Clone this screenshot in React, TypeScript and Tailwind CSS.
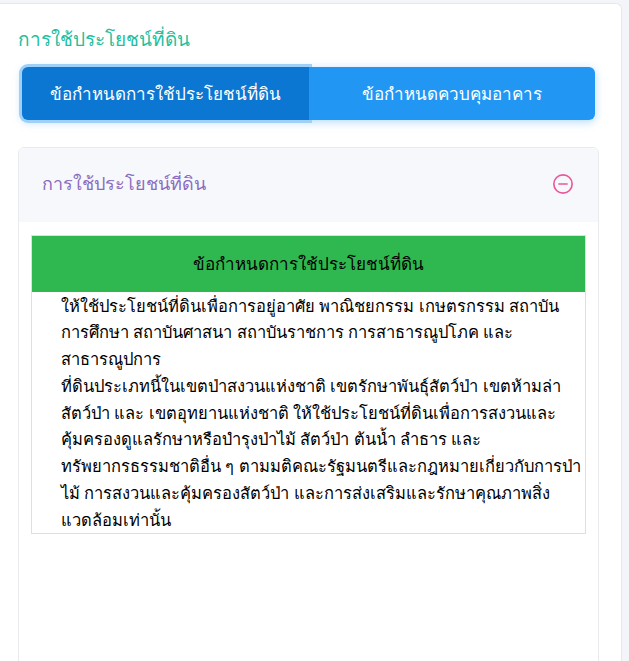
import React, { useState } from 'react';

// lines broken where the original page breaks them
const RULE_LINES = [
  'ให้ใช้ประโยชน์ที่ดินเพื่อการอยู่อาศัย พาณิชยกรรม เกษตรกรรม สถาบัน',
  'การศึกษา สถาบันศาสนา สถาบันราชการ การสาธารณูปโภค และ',
  'สาธารณูปการ',
  'ที่ดินประเภทนี้ในเขตป่าสงวนแห่งชาติ เขตรักษาพันธุ์สัตว์ป่า เขตห้ามล่า',
  'สัตว์ป่า และ เขตอุทยานแห่งชาติ ให้ใช้ประโยชน์ที่ดินเพื่อการสงวนและ',
  'คุ้มครองดูแลรักษาหรือบำรุงป่าไม้ สัตว์ป่า ต้นน้ำ ลำธาร และ',
  'ทรัพยากรธรรมชาติอื่น ๆ ตามมติคณะรัฐมนตรีและกฎหมายเกี่ยวกับการป่า',
  'ไม้ การสงวนและคุ้มครองสัตว์ป่า และการส่งเสริมและรักษาคุณภาพสิ่ง',
  'แวดล้อมเท่านั้น',
];

export default function App() {
  const [tab, setTab] = useState<'land' | 'building'>('land');
  const [open, setOpen] = useState(true);

  return (
    <div className="min-h-[661px] bg-[#f4f5f8] pt-[3px] font-['Noto_Sans','Liberation_Sans',sans-serif]">
      <div className="w-[622px] h-[658px] overflow-hidden bg-white border-t border-r border-[#e6e8ee] rounded-tr-md pt-[22px] pl-[18px] pr-[22px]">
        <h1 className="text-[19px] leading-[26px] text-[#1fbf9f]">การใช้ประโยชน์ที่ดิน</h1>

        {/* tabs */}
        <div className="mt-[15px] ml-[4px] mr-[4px] flex rounded-md shadow-[0_2px_8px_rgba(33,150,243,0.35)]">
          <button
            onClick={() => setTab('land')}
            className={`flex-1 h-[53px] rounded-l-md text-white text-[17px] font-medium ${tab === 'land' ? 'bg-[#0b77d2] ring-[3px] ring-[#9fd0f7]' : 'bg-[#2196f3]'}`}
          >
            ข้อกำหนดการใช้ประโยชน์ที่ดิน
          </button>
          <button
            onClick={() => setTab('building')}
            className={`flex-1 h-[53px] rounded-r-md text-white text-[17px] font-medium ${tab === 'building' ? 'bg-[#0b77d2] ring-[3px] ring-[#9fd0f7]' : 'bg-[#2196f3]'}`}
          >
            ข้อกำหนดควบคุมอาคาร
          </button>
        </div>

        {/* accordion card */}
        <div className="mt-[27px] border border-[#e8eaef] rounded-md bg-white h-[520px]">
          <div className="h-[74px] bg-[#f7f8fb] flex items-center justify-between pl-[23px] pr-[24px] rounded-t-md">
            <span className="text-[18px] text-[#8a6cc0] -mt-[3px]">การใช้ประโยชน์ที่ดิน</span>
            <button onClick={() => setOpen(!open)} className="text-[#e8589a] -mt-[3px]">
              <svg width="22" height="22" viewBox="0 0 24 24" fill="none" stroke="currentColor" strokeWidth="1.8" strokeLinecap="round">
                <circle cx="12" cy="12" r="10" />
                {open ? <line x1="7.5" y1="12" x2="16.5" y2="12" /> : <><line x1="7.5" y1="12" x2="16.5" y2="12" /><line x1="12" y1="7.5" x2="12" y2="16.5" /></>}
              </svg>
            </button>
          </div>
          {open && (
            <div className="px-[12px] pt-[13px]">
              <table className="w-full border border-[#dcdfe4] border-collapse">
                <thead>
                  <tr>
                    <th className="bg-[#2fb84f] h-[56px] text-[17px] font-normal text-black">ข้อกำหนดการใช้ประโยชน์ที่ดิน</th>
                  </tr>
                </thead>
                <tbody>
                  <tr>
                    <td className="pl-[29px] pr-[2px] pt-[1px] pb-0 text-[16.5px] leading-[26.75px] text-black align-top">
                      {RULE_LINES.map((l) => (
                        <div key={l} className="whitespace-nowrap">{l}</div>
                      ))}
                    </td>
                  </tr>
                </tbody>
              </table>
            </div>
          )}
        </div>
      </div>
    </div>
  );
}
